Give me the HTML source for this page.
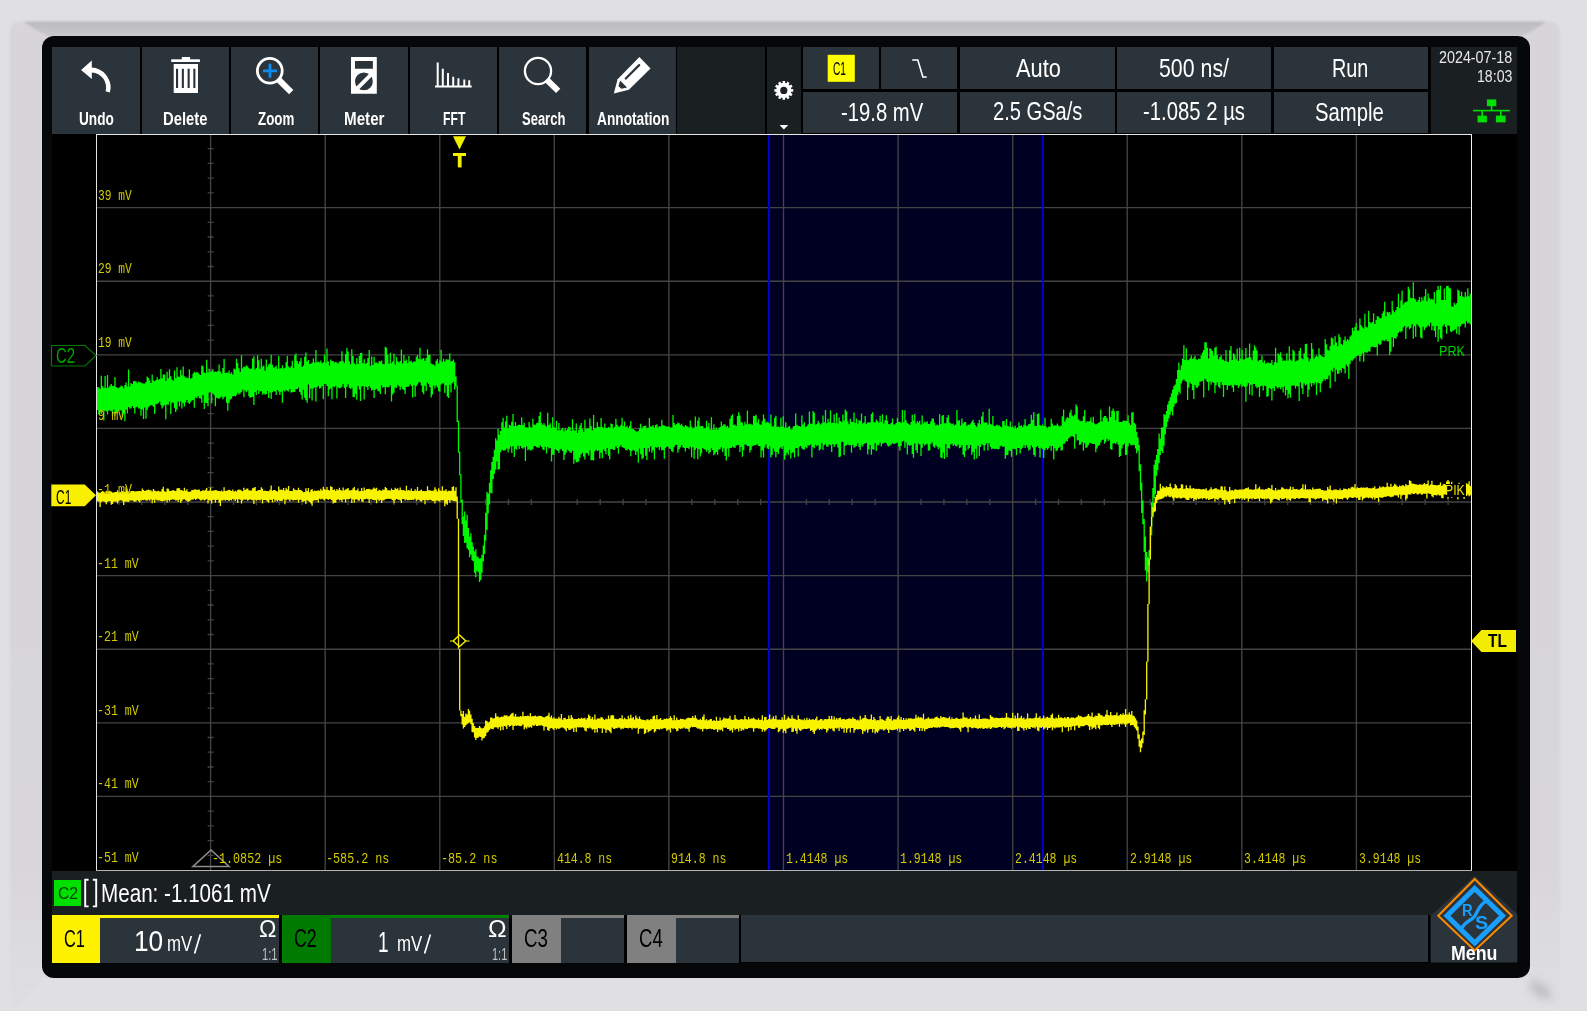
<!DOCTYPE html>
<html><head><meta charset="utf-8"><title>Oscilloscope</title>
<style>
html,body{margin:0;padding:0;}
body{width:1587px;height:1011px;overflow:hidden;position:relative;background:#e0dfe1;}
body>div,body>svg{position:absolute;}
.t{white-space:nowrap;transform-origin:0 0;font-kerning:none;}
</style></head><body>
<svg style="left:0;top:0" width="1587" height="1011" viewBox="0 0 1587 1011">
<defs>
<linearGradient id="gtop" x1="0" y1="0" x2="0" y2="1"><stop offset="0" stop-color="#bbbabd"/><stop offset="0.35" stop-color="#c1c0c3"/><stop offset="1" stop-color="#c8c7ca"/></linearGradient>
<linearGradient id="gside" gradientUnits="userSpaceOnUse" x1="0" y1="0" x2="0" y2="1011"><stop offset="0" stop-color="#d7d5d8"/><stop offset="0.85" stop-color="#d8d6d9"/><stop offset="1" stop-color="#dfdee0"/></linearGradient>
<filter id="bl1" x="-5%" y="-5%" width="110%" height="110%"><feGaussianBlur stdDeviation="1.2"/></filter>
<filter id="bl4" x="-100%" y="-100%" width="300%" height="300%"><feGaussianBlur stdDeviation="5"/></filter>
</defs>
<g filter="url(#bl1)">
<path d="M22,21.5 L1548,21.5 Q1560,21.5 1560,33 L1560,1011 L10,1011 L10,33 Q10,21.5 22,21.5 Z" fill="url(#gside)"/>
<path d="M24,21.5 L1546,21.5 Q1536,30 1521,36.5 L49,36.5 Q34,30 24,21.5 Z" fill="url(#gtop)"/>
<path d="M10,1013 L42,978 L1530,978 L1560,1013 Z" fill="#e0dfe1"/>
</g>
<ellipse cx="1540" cy="990" rx="13" ry="6" fill="#bdbcbf" transform="rotate(38 1540 990)" filter="url(#bl4)"/>
</svg>
<div style="left:42.00px;top:36.00px;width:1488.00px;height:942.00px;background:#060709;border-radius:12px;"></div>
<div style="left:52.00px;top:47.00px;width:1465.00px;height:916.00px;background:#000;"></div>
<div style="left:52.00px;top:47.00px;width:87.50px;height:86.50px;background:#2b343a;"></div>
<div style="left:141.70px;top:47.00px;width:87.30px;height:86.50px;background:#2b343a;"></div>
<div style="left:231.10px;top:47.00px;width:87.10px;height:86.50px;background:#2b343a;"></div>
<div style="left:320.40px;top:47.00px;width:87.40px;height:86.50px;background:#2b343a;"></div>
<div style="left:409.90px;top:47.00px;width:87.30px;height:86.50px;background:#2b343a;"></div>
<div style="left:499.20px;top:47.00px;width:87.20px;height:86.50px;background:#2b343a;"></div>
<div style="left:588.50px;top:47.00px;width:87.30px;height:86.50px;background:#2b343a;"></div>
<div style="left:676.90px;top:47.00px;width:88.20px;height:86.50px;background:#1a1f22;"></div>
<div style="left:767.00px;top:47.00px;width:34.00px;height:86.50px;background:#1a1f22;"></div>
<div style="left:802.60px;top:47.00px;width:76.20px;height:42.20px;background:#2b343a;"></div>
<div style="left:880.70px;top:47.00px;width:76.80px;height:42.20px;background:#2b343a;"></div>
<div style="left:959.50px;top:47.00px;width:155.30px;height:42.20px;background:#2b343a;"></div>
<div style="left:1117.20px;top:47.00px;width:154.20px;height:42.20px;background:#2b343a;"></div>
<div style="left:1273.80px;top:47.00px;width:154.70px;height:42.20px;background:#2b343a;"></div>
<div style="left:802.60px;top:91.90px;width:154.90px;height:41.60px;background:#2b343a;"></div>
<div style="left:959.50px;top:91.90px;width:155.30px;height:41.60px;background:#2b343a;"></div>
<div style="left:1117.20px;top:91.90px;width:154.20px;height:41.60px;background:#2b343a;"></div>
<div style="left:1273.80px;top:91.90px;width:154.70px;height:41.60px;background:#2b343a;"></div>
<div style="left:1430.60px;top:47.00px;width:86.40px;height:86.50px;background:#1a1f22;"></div>
<div class="t" style="left:78.68px;top:110.19px;font-family:'Liberation Sans',sans-serif;font-size:18.31px;line-height:18.31px;font-weight:700;color:#fff;transform:scaleX(0.7449);">Undo</div>
<div class="t" style="left:163.01px;top:110.19px;font-family:'Liberation Sans',sans-serif;font-size:18.31px;line-height:18.31px;font-weight:700;color:#fff;transform:scaleX(0.8095);">Delete</div>
<div class="t" style="left:257.70px;top:110.19px;font-family:'Liberation Sans',sans-serif;font-size:18.31px;line-height:18.31px;font-weight:700;color:#fff;transform:scaleX(0.7288);">Zoom</div>
<div class="t" style="left:344.08px;top:110.19px;font-family:'Liberation Sans',sans-serif;font-size:18.31px;line-height:18.31px;font-weight:700;color:#fff;transform:scaleX(0.8300);">Meter</div>
<div class="t" style="left:442.58px;top:110.19px;font-family:'Liberation Sans',sans-serif;font-size:18.31px;line-height:18.31px;font-weight:700;color:#fff;transform:scaleX(0.6659);">FFT</div>
<div class="t" style="left:522.33px;top:110.19px;font-family:'Liberation Sans',sans-serif;font-size:18.31px;line-height:18.31px;font-weight:700;color:#fff;transform:scaleX(0.7102);">Search</div>
<div class="t" style="left:597.46px;top:110.19px;font-family:'Liberation Sans',sans-serif;font-size:18.31px;line-height:18.31px;font-weight:700;color:#fff;transform:scaleX(0.7492);">Annotation</div>
<svg style="left:0;top:0" width="1587" height="1011" viewBox="0 0 1587 1011">
<g fill="#fff">
<path d="M81.1,70L91.8,60.5V67.6A20,20 0 0 1 110.6,88.5L109.8,92.5L105.6,91.3A15,15 0 0 0 91.8,72.4V79.1Z"/>
<rect x="171.2" y="59.3" width="28.7" height="2.7"/><rect x="181.8" y="57" width="8.3" height="3"/>
<path fill-rule="evenodd" d="M173.7,64H198V92.9H173.7Z M176,68.7h2.1V88h-2.1Z M181.8,68.7h2.1V88h-2.1Z M187.6,68.7h2.1V88h-2.1Z M193.3,68.7h2.1V88h-2.1Z"/>
<path fill-rule="evenodd" d="M351,56.9H376.8V93.8H351Z M355,60.9H372.9V68.7H355Z M355,81.4A8.9,8.9 0 1 0 372.8,81.4A8.9,8.9 0 1 0 355,81.4Z"/>
<path d="M356.5,86.5L370.5,72.5L373.2,75.2L359.2,89.2Z" transform="translate(-0.3,0.3)"/>
<path d="M435,85.6H471.7V87.6H435Z M436.7,62.5h2V86h-2Z M441.8,68.8h2V86h-2Z M447,73.1h2V86h-2Z M452.2,76.8h2V86h-2Z M457.4,78.2h2V86h-2Z M463.3,79.5h2V86h-2Z M468.2,80.2h2V86h-2Z"/>
<path d="M639.4,57.1L650.5,68.5L628.9,89.8L613.8,93.6L617.6,79.2Z"/>
</g>
<g fill="none" stroke="#fff">
<circle cx="269.8" cy="70.8" r="12.4" stroke-width="2.8"/>
<circle cx="538" cy="71" r="13.1" stroke-width="2.3"/>
</g>
<path d="M278.5,79.5L291.2,92.1" stroke="#fff" stroke-width="6"/>
<path d="M546.5,79.5L558.2,90.9" stroke="#fff" stroke-width="6"/>
<path d="M263,70.8H277.1M270,63.8V77.8" stroke="#0a8cf5" stroke-width="2.8"/>
<path d="M625.8,78.5L639.2,65.1" stroke="#2b343a" stroke-width="2.2" stroke-linecap="round"/>
<path d="M620,80.5L627.1,87.6L621.4,88.7L618.5,86.3Z" fill="#2b343a"/>
<path d="M791.30,89.17L793.21,89.09L793.21,91.71L791.30,91.63L790.91,93.09L792.60,93.97L791.30,96.24L789.68,95.21L788.61,96.28L789.64,97.90L787.37,99.20L786.49,97.51L785.03,97.90L785.11,99.81L782.49,99.81L782.57,97.90L781.11,97.51L780.23,99.20L777.96,97.90L778.99,96.28L777.92,95.21L776.30,96.24L775.00,93.97L776.69,93.09L776.30,91.63L774.39,91.71L774.39,89.09L776.30,89.17L776.69,87.71L775.00,86.83L776.30,84.56L777.92,85.59L778.99,84.52L777.96,82.90L780.23,81.60L781.11,83.29L782.57,82.90L782.49,80.99L785.11,80.99L785.03,82.90L786.49,83.29L787.37,81.60L789.64,82.90L788.61,84.52L789.68,85.59L791.30,84.56L792.60,86.83L790.91,87.71ZM787.40,90.40A3.6,3.6 0 1 0 780.20,90.40A3.6,3.6 0 1 0 787.40,90.40Z" fill="#fff" fill-rule="evenodd"/>
<path d="M779.6,125H788.2L783.9,129.6Z" fill="#fff"/>
<rect x="827.7" y="54.8" width="27.1" height="27" fill="#ffff00"/>
<path d="M912.2,60H917.8L922.9,77H926.7" fill="none" stroke="#fff" stroke-width="1.6"/>
<g fill="#00e000">
<rect x="1486.9" y="99.4" width="9.4" height="6.8"/>
<rect x="1473" y="109.8" width="36.9" height="1.6"/>
<rect x="1490.8" y="105" width="1.6" height="5"/>
<rect x="1477.5" y="115.6" width="9.4" height="6.8"/>
<rect x="1495.9" y="115.6" width="9.7" height="6.8"/>
<rect x="1481.4" y="111" width="1.6" height="5"/>
<rect x="1500" y="111" width="1.6" height="5"/>
</g>
</svg>
<div class="t" style="left:832.88px;top:59.89px;font-family:'Liberation Sans',sans-serif;font-size:18.31px;line-height:18.31px;font-weight:400;color:#000;transform:scaleX(0.5559);">C1</div>
<div class="t" style="left:1015.96px;top:55.59px;font-family:'Liberation Sans',sans-serif;font-size:25.87px;line-height:25.87px;font-weight:400;color:#fff;transform:scaleX(0.8428);">Auto</div>
<div class="t" style="left:1158.94px;top:55.59px;font-family:'Liberation Sans',sans-serif;font-size:25.87px;line-height:25.87px;font-weight:400;color:#fff;transform:scaleX(0.8255);">500 ns/</div>
<div class="t" style="left:1332.17px;top:56.31px;font-family:'Liberation Sans',sans-serif;font-size:25.15px;line-height:25.15px;font-weight:400;color:#fff;transform:scaleX(0.7895);">Run</div>
<div class="t" style="left:840.70px;top:98.97px;font-family:'Liberation Sans',sans-serif;font-size:26.02px;line-height:26.02px;font-weight:400;color:#fff;transform:scaleX(0.7796);">-19.8 mV</div>
<div class="t" style="left:993.29px;top:99.09px;font-family:'Liberation Sans',sans-serif;font-size:25.29px;line-height:25.29px;font-weight:400;color:#fff;transform:scaleX(0.7953);">2.5 GSa/s</div>
<div class="t" style="left:1142.90px;top:99.09px;font-family:'Liberation Sans',sans-serif;font-size:25.29px;line-height:25.29px;font-weight:400;color:#fff;transform:scaleX(0.8031);">-1.085 2 µs</div>
<div class="t" style="left:1315.08px;top:98.67px;font-family:'Liberation Sans',sans-serif;font-size:26.02px;line-height:26.02px;font-weight:400;color:#fff;transform:scaleX(0.7802);">Sample</div>
<div class="t" style="left:1439.28px;top:49.92px;font-family:'Liberation Sans',sans-serif;font-size:16.86px;line-height:16.86px;font-weight:400;color:#e8e8e8;transform:scaleX(0.8492);">2024-07-18</div>
<div class="t" style="left:1476.82px;top:67.89px;font-family:'Liberation Sans',sans-serif;font-size:16.42px;line-height:16.42px;font-weight:400;color:#e8e8e8;transform:scaleX(0.8613);">18:03</div>
<svg style="left:0;top:0" width="1587" height="1011" viewBox="0 0 1587 1011" shape-rendering="crispEdges"><rect x="768.5" y="135" width="274.5" height="735" fill="#000022"/><path d="M210.6,134V870M325.2,134V870M439.8,134V870M554.3,134V870M668.9,134V870M783.5,134V870M898.1,134V870M1012.7,134V870M1127.2,134V870M1241.8,134V870M1356.4,134V870M96,207.6H1471M96,281.2H1471M96,354.8H1471M96,428.4H1471M96,502.0H1471M96,575.6H1471M96,649.2H1471M96,722.8H1471M96,796.4H1471" stroke="#444" stroke-width="1.35" fill="none" shape-rendering="auto"/><path d="M207.6,148.7H213.6M207.6,163.4H213.6M207.6,178.2H213.6M207.6,192.9H213.6M207.6,222.3H213.6M207.6,237.0H213.6M207.6,251.8H213.6M207.6,266.5H213.6M207.6,295.9H213.6M207.6,310.6H213.6M207.6,325.4H213.6M207.6,340.1H213.6M207.6,369.5H213.6M207.6,384.2H213.6M207.6,399.0H213.6M207.6,413.7H213.6M207.6,443.1H213.6M207.6,457.8H213.6M207.6,472.6H213.6M207.6,487.3H213.6M207.6,516.7H213.6M207.6,531.4H213.6M207.6,546.2H213.6M207.6,560.9H213.6M207.6,590.3H213.6M207.6,605.0H213.6M207.6,619.8H213.6M207.6,634.5H213.6M207.6,663.9H213.6M207.6,678.6H213.6M207.6,693.4H213.6M207.6,708.1H213.6M207.6,737.5H213.6M207.6,752.2H213.6M207.6,767.0H213.6M207.6,781.7H213.6M207.6,811.1H213.6M207.6,825.8H213.6M207.6,840.6H213.6M207.6,855.3H213.6M118.9,499.0V505.0M141.8,499.0V505.0M164.8,499.0V505.0M187.7,499.0V505.0M233.5,499.0V505.0M256.4,499.0V505.0M279.3,499.0V505.0M302.2,499.0V505.0M348.1,499.0V505.0M371.0,499.0V505.0M393.9,499.0V505.0M416.8,499.0V505.0M462.7,499.0V505.0M485.6,499.0V505.0M508.5,499.0V505.0M531.4,499.0V505.0M577.2,499.0V505.0M600.2,499.0V505.0M623.1,499.0V505.0M646.0,499.0V505.0M691.8,499.0V505.0M714.8,499.0V505.0M737.7,499.0V505.0M760.6,499.0V505.0M806.4,499.0V505.0M829.3,499.0V505.0M852.2,499.0V505.0M875.2,499.0V505.0M921.0,499.0V505.0M943.9,499.0V505.0M966.8,499.0V505.0M989.8,499.0V505.0M1035.6,499.0V505.0M1058.5,499.0V505.0M1081.4,499.0V505.0M1104.3,499.0V505.0M1150.2,499.0V505.0M1173.1,499.0V505.0M1196.0,499.0V505.0M1218.9,499.0V505.0M1264.8,499.0V505.0M1287.7,499.0V505.0M1310.6,499.0V505.0M1333.5,499.0V505.0M1379.3,499.0V505.0M1402.2,499.0V505.0M1425.2,499.0V505.0M1448.1,499.0V505.0" stroke="#444" stroke-width="1.3" fill="none" shape-rendering="auto"/><path d="M768.8,135V870M1043.2,135V870" stroke="#0000d0" stroke-width="1.5" fill="none"/><path d="M97.6 386.9V410.2M98.9 387.4V414.4M100.1 388.9V412.3M101.3 375.8V414.1M102.6 386.3V410.3M103.8 387.9V420.5M105.1 375.9V410.7M106.3 387.9V411.3M107.5 374.9V414.5M108.8 387.6V410.5M110.0 385.4V410.6M111.3 384.1V411.3M112.5 385.9V416.3M113.7 386.0V409.6M115.0 377.0V415.4M116.2 387.3V413.1M117.5 387.4V413.7M118.7 388.2V410.2M119.9 387.0V410.2M121.2 385.5V410.4M122.4 386.3V416.9M123.7 388.5V413.0M124.9 384.9V421.3M126.1 382.4V409.6M127.4 386.6V413.3M128.6 369.5V407.1M129.9 386.5V408.8M131.1 383.1V408.2M132.3 383.9V406.2M133.6 381.3V408.0M134.8 380.8V413.6M136.1 381.6V407.3M137.3 383.3V406.8M138.5 381.6V408.6M139.8 382.3V408.6M141.0 382.4V415.8M142.3 383.2V409.4M143.5 383.6V419.1M144.7 383.6V407.4M146.0 381.9V418.7M147.2 376.4V409.9M148.5 378.1V407.2M149.7 380.3V406.0M150.9 383.0V404.9M152.2 374.6V405.5M153.4 380.6V406.7M154.7 381.2V413.9M155.9 380.1V404.3M157.1 377.3V403.9M158.4 379.8V403.1M159.6 378.9V401.4M160.9 369.0V404.9M162.1 378.3V408.4M163.3 374.6V406.4M164.6 374.6V405.3M165.8 381.0V419.2M167.1 371.7V404.4M168.3 378.3V404.7M169.5 369.3V401.6M170.8 376.3V414.3M172.0 379.5V402.7M173.3 380.5V402.8M174.5 370.5V408.1M175.7 378.2V412.0M177.0 367.3V409.4M178.2 376.4V401.4M179.5 376.9V406.4M180.7 370.0V401.6M181.9 375.3V408.4M183.2 366.6V402.9M184.4 376.2V406.4M185.7 377.4V402.6M186.9 377.7V400.0M188.1 377.7V402.8M189.4 369.3V403.9M190.6 378.7V402.3M191.9 377.8V400.6M193.1 373.5V400.1M194.3 371.7V407.7M195.6 372.8V397.6M196.8 372.0V398.2M198.1 372.6V396.0M199.3 374.3V398.2M200.5 375.0V398.5M201.8 365.6V402.8M203.0 366.3V395.1M204.3 372.4V408.9M205.5 373.2V402.8M206.7 359.7V403.0M208.0 372.5V406.3M209.2 368.9V392.7M210.5 371.8V392.1M211.7 370.8V403.3M212.9 369.5V393.5M214.2 372.1V395.2M215.4 371.6V406.3M216.7 371.9V397.7M217.9 371.0V398.3M219.1 364.5V399.1M220.4 371.5V397.4M221.6 373.7V396.4M222.9 367.9V399.3M224.1 359.0V397.4M225.3 373.0V396.5M226.6 372.7V402.8M227.8 372.8V410.7M229.1 370.5V402.9M230.3 373.7V399.4M231.5 372.3V398.8M232.8 374.6V396.3M234.0 368.6V396.0M235.3 369.5V396.2M236.5 358.8V395.2M237.7 363.1V392.7M239.0 368.3V394.6M240.2 372.1V393.5M241.5 355.3V392.0M242.7 368.3V389.8M243.9 366.4V397.2M245.2 366.9V390.5M246.4 365.3V392.3M247.7 366.3V390.6M248.9 368.0V396.3M250.1 369.1V398.1M251.4 368.6V396.9M252.6 358.4V397.0M253.9 356.3V405.0M255.1 369.5V391.9M256.3 368.1V395.1M257.6 355.6V390.3M258.8 360.2V393.9M260.1 368.7V391.2M261.3 358.7V391.0M262.5 366.5V394.8M263.8 365.6V393.6M265.0 370.7V394.7M266.3 359.6V394.1M267.5 366.7V390.9M268.7 364.6V398.1M270.0 363.4V392.4M271.2 354.8V398.9M272.5 364.7V392.3M273.7 367.7V390.7M274.9 367.2V391.5M276.2 365.6V394.9M277.4 368.7V390.1M278.7 356.0V391.6M279.9 368.6V395.1M281.1 368.2V391.7M282.4 365.2V402.7M283.6 368.4V390.5M284.9 368.1V391.7M286.1 362.1V389.9M287.3 356.1V390.9M288.6 366.4V391.4M289.8 368.1V388.9M291.1 366.3V392.8M292.3 360.8V392.0M293.5 368.0V392.3M294.8 355.2V391.9M296.0 353.4V389.1M297.3 360.9V389.2M298.5 363.8V387.6M299.7 361.2V391.9M301.0 357.9V394.7M302.2 367.0V399.6M303.5 365.6V389.7M304.7 356.7V397.8M305.9 352.6V400.2M307.2 361.5V402.7M308.4 360.0V384.4M309.7 363.9V398.2M310.9 363.7V388.6M312.1 362.6V400.6M313.4 358.6V388.5M314.6 362.5V387.5M315.9 350.0V401.5M317.1 362.2V387.3M318.3 361.5V385.9M319.6 362.4V388.4M320.8 360.4V387.9M322.1 363.2V385.9M323.3 362.5V399.2M324.5 354.5V383.9M325.8 362.7V383.9M327.0 348.6V386.0M328.3 361.5V396.2M329.5 365.6V389.5M330.7 359.6V388.5M332.0 361.0V399.2M333.2 361.1V386.7M334.5 362.5V387.0M335.7 361.8V385.8M336.9 362.6V398.4M338.2 363.5V387.6M339.4 361.4V388.3M340.7 361.3V388.0M341.9 351.3V386.8M343.1 361.0V383.9M344.4 362.8V388.1M345.6 354.2V398.0M346.9 347.9V386.7M348.1 351.4V384.3M349.3 361.3V387.8M350.6 364.2V389.0M351.8 349.2V387.4M353.1 356.1V397.1M354.3 363.2V397.3M355.5 364.5V393.8M356.8 357.9V399.8M358.0 363.9V386.0M359.3 356.0V389.5M360.5 353.1V400.9M361.7 352.8V386.4M363.0 363.2V386.1M364.2 359.3V399.5M365.5 363.9V386.4M366.7 363.0V386.9M367.9 357.9V389.9M369.2 349.9V386.0M370.4 365.8V387.8M371.7 356.5V390.6M372.9 365.0V389.8M374.1 356.7V397.9M375.4 362.7V389.8M376.6 362.5V389.1M377.9 363.4V390.9M379.1 361.0V391.4M380.3 361.4V393.9M381.6 360.4V385.2M382.8 363.9V387.8M384.1 364.3V387.1M385.3 346.7V394.2M386.5 347.7V386.9M387.8 354.6V387.5M389.0 363.4V387.3M390.3 352.7V385.5M391.5 363.3V401.6M392.7 361.6V394.4M394.0 353.4V392.7M395.2 364.5V387.5M396.5 356.9V387.9M397.7 361.0V384.7M398.9 362.6V386.3M400.2 361.1V390.1M401.4 349.5V386.7M402.7 363.4V389.0M403.9 355.1V390.3M405.1 361.0V394.1M406.4 359.5V387.1M407.6 363.3V386.8M408.9 356.1V386.4M410.1 361.6V384.3M411.3 360.8V385.9M412.6 362.5V397.5M413.8 361.5V385.0M415.1 361.6V396.7M416.3 356.8V386.2M417.5 355.0V384.6M418.8 359.0V382.4M420.0 347.8V382.2M421.3 359.5V385.4M422.5 358.7V392.2M423.7 357.9V394.3M425.0 360.9V385.7M426.2 357.9V391.0M427.5 349.2V382.6M428.7 354.8V384.2M429.9 354.7V387.3M431.2 363.4V397.5M432.4 364.2V394.4M433.7 364.5V385.6M434.9 365.4V388.3M436.1 360.7V385.5M437.4 358.9V387.6M438.6 363.4V391.2M439.9 360.5V391.7M441.1 349.8V384.5M442.3 361.8V383.3M443.6 358.7V383.4M444.8 361.4V393.0M446.1 359.3V385.4M447.3 359.5V396.4M448.5 359.6V398.0M449.8 353.3V384.8M451.0 361.3V392.4M452.3 361.0V383.0M453.5 359.4V381.7M454.7 362.5V389.6M456.0 376.6V386.3M457.2 385.4V421.9M458.5 420.8V452.7M459.7 451.8V475.3M460.9 474.2V502.4M462.2 499.9V524.2M463.4 516.4V536.0M464.7 511.6V543.1M465.9 520.6V542.8M467.1 514.8V548.2M468.4 528.1V550.0M469.6 536.4V557.3M470.9 533.2V554.5M472.1 541.9V560.2M473.3 546.5V561.3M474.6 551.2V572.7M475.8 549.3V577.3M477.1 556.2V570.7M478.3 557.5V572.2M479.5 558.8V582.0M480.8 558.3V580.0M482.0 554.7V572.8M483.3 545.4V561.6M484.5 534.7V554.1M485.7 512.8V540.8M487.0 491.8V529.7M488.2 493.5V513.6M489.5 482.7V504.6M490.7 470.2V492.8M491.9 462.0V493.6M493.2 456.8V478.9M494.4 449.8V473.7M495.7 438.3V469.7M496.9 440.6V461.5M498.1 428.7V469.8M499.4 434.8V468.9M500.6 430.9V452.2M501.9 422.3V449.8M503.1 417.7V450.6M504.3 427.4V450.4M505.6 421.2V450.2M506.8 415.7V448.5M508.1 428.2V452.6M509.3 424.8V449.1M510.5 425.4V446.6M511.8 421.8V452.9M513.0 414.0V446.3M514.3 426.1V457.0M515.5 421.9V448.7M516.7 426.0V449.8M518.0 425.1V445.8M519.2 424.5V449.1M520.5 425.1V446.0M521.7 417.6V447.9M522.9 424.9V448.8M524.2 422.8V447.2M525.4 427.3V460.9M526.7 427.3V446.4M527.9 427.8V450.3M529.1 422.1V449.3M530.4 426.7V450.5M531.6 427.8V450.2M532.9 418.8V449.3M534.1 424.6V446.0M535.3 424.9V446.3M536.6 423.2V447.2M537.8 422.8V447.6M539.1 416.0V447.8M540.3 411.9V445.5M541.5 423.1V447.1M542.8 424.8V449.5M544.0 423.2V450.2M545.3 425.3V446.7M546.5 426.5V453.6M547.7 412.8V446.9M549.0 425.1V448.7M550.2 423.2V448.1M551.5 427.9V461.6M552.7 417.3V454.7M553.9 426.8V454.7M555.2 428.1V448.9M556.4 420.8V450.1M557.7 430.6V451.0M558.9 423.1V453.1M560.1 430.2V449.5M561.4 429.3V448.8M562.6 427.9V451.0M563.9 431.3V460.0M565.1 428.2V454.8M566.3 430.3V452.4M567.6 428.7V449.4M568.8 426.5V451.1M570.1 427.2V452.4M571.3 431.1V452.9M572.5 419.2V450.7M573.8 429.8V463.8M575.0 430.8V459.4M576.3 423.6V462.2M577.5 433.0V462.2M578.7 429.8V461.6M580.0 425.6V457.8M581.2 422.9V454.6M582.5 428.9V452.8M583.7 432.1V456.4M584.9 419.7V459.6M586.2 429.0V452.9M587.4 428.2V453.4M588.7 428.6V455.6M589.9 418.5V450.2M591.1 426.0V460.3M592.4 430.2V459.9M593.6 414.9V460.6M594.9 428.2V451.2M596.1 427.8V449.8M597.3 421.9V450.9M598.6 426.8V450.6M599.8 427.2V458.4M601.1 417.9V452.8M602.3 426.9V458.3M603.5 428.2V449.2M604.8 423.6V450.9M606.0 428.0V454.2M607.3 428.3V448.1M608.5 427.1V455.8M609.7 427.8V459.5M611.0 423.6V449.1M612.2 424.1V449.0M613.5 428.6V449.9M614.7 426.8V449.8M615.9 418.7V446.3M617.2 424.7V448.0M618.4 426.5V453.8M619.7 426.8V447.1M620.9 424.7V445.3M622.1 417.7V447.2M623.4 425.9V447.7M624.6 421.6V448.3M625.9 427.1V450.1M627.1 425.7V450.4M628.3 427.9V449.1M629.6 425.7V450.6M630.8 420.9V456.2M632.1 428.9V450.9M633.3 428.9V449.7M634.5 430.0V450.7M635.8 431.2V455.1M637.0 431.8V451.6M638.3 430.9V462.8M639.5 428.4V448.4M640.7 423.7V454.2M642.0 428.5V459.3M643.2 426.2V458.0M644.5 426.1V447.9M645.7 425.4V455.7M646.9 428.2V460.1M648.2 427.7V447.9M649.4 418.0V451.7M650.7 426.4V446.3M651.9 426.5V452.7M653.1 425.1V450.2M654.4 427.6V459.6M655.6 425.0V446.9M656.9 424.3V447.7M658.1 427.5V446.8M659.3 425.9V449.9M660.6 426.6V447.3M661.8 419.8V450.4M663.1 425.3V449.9M664.3 425.6V458.8M665.5 426.3V448.0M666.8 426.5V446.8M668.0 426.6V446.7M669.3 426.4V448.6M670.5 427.5V449.1M671.7 427.6V451.2M673.0 415.0V452.3M674.2 422.9V447.1M675.5 424.9V445.0M676.7 423.9V444.8M677.9 422.6V452.7M679.2 423.3V449.3M680.4 425.0V447.2M681.7 423.7V445.0M682.9 426.1V447.4M684.1 427.0V447.9M685.4 424.9V451.4M686.6 425.9V447.9M687.9 426.5V447.9M689.1 427.5V449.2M690.3 420.4V446.8M691.6 426.4V457.2M692.8 428.6V447.3M694.1 427.5V458.8M695.3 416.4V449.9M696.5 426.6V448.0M697.8 420.6V459.2M699.0 417.6V449.3M700.3 426.2V456.5M701.5 426.0V453.2M702.7 425.9V447.9M704.0 428.9V449.1M705.2 428.0V449.7M706.5 420.7V451.7M707.7 426.7V449.8M708.9 423.0V453.8M710.2 429.6V452.0M711.4 417.2V448.1M712.7 429.5V449.9M713.9 424.3V455.2M715.1 429.6V453.8M716.4 427.4V451.9M717.6 429.7V454.7M718.9 428.2V449.6M720.1 426.9V449.2M721.3 421.4V447.2M722.6 425.7V452.1M723.8 424.3V448.2M725.1 424.6V456.1M726.3 426.7V460.6M727.5 425.8V448.6M728.8 427.7V456.8M730.0 418.7V448.0M731.3 415.8V448.1M732.5 414.3V446.4M733.7 424.8V447.6M735.0 424.7V447.9M736.2 426.1V445.6M737.5 416.1V444.9M738.7 412.3V445.1M739.9 415.6V451.9M741.2 422.1V447.0M742.4 422.8V456.7M743.7 425.7V450.2M744.9 421.8V444.5M746.1 424.3V444.8M747.4 410.6V446.3M748.6 424.2V446.1M749.9 423.5V452.6M751.1 424.3V450.1M752.3 424.8V446.3M753.6 415.8V445.4M754.8 415.9V445.3M756.1 414.7V444.9M757.3 422.4V444.3M758.5 419.3V446.0M759.8 424.3V446.1M761.0 424.9V457.5M762.3 421.0V450.5M763.5 414.6V457.4M764.7 418.7V447.6M766.0 422.8V444.6M767.2 421.7V448.6M768.5 422.5V449.2M769.7 423.6V446.3M770.9 414.5V457.6M772.2 426.6V454.9M773.4 426.2V448.5M774.7 417.8V451.6M775.9 415.7V457.2M777.1 426.9V452.0M778.4 426.4V454.0M779.6 427.2V448.8M780.9 417.7V447.2M782.1 426.4V449.1M783.3 416.2V446.1M784.6 427.4V459.7M785.8 422.3V455.6M787.1 427.9V452.8M788.3 426.8V454.7M789.5 426.0V449.8M790.8 429.2V458.6M792.0 429.2V452.9M793.3 426.6V452.3M794.5 426.0V457.5M795.7 413.4V448.2M797.0 424.7V447.9M798.2 425.9V456.4M799.5 425.9V446.8M800.7 426.8V445.9M801.9 415.6V448.6M803.2 424.4V449.4M804.4 422.3V449.5M805.7 427.0V446.9M806.9 425.9V448.3M808.1 424.3V445.2M809.4 411.5V445.7M810.6 423.4V444.5M811.9 423.9V457.6M813.1 411.0V447.0M814.3 412.7V448.3M815.6 424.4V444.8M816.8 424.1V446.2M818.1 420.7V445.3M819.3 422.8V450.6M820.5 424.4V449.3M821.8 423.2V443.2M823.0 415.4V449.9M824.3 422.2V444.9M825.5 410.0V443.7M826.7 423.3V446.4M828.0 418.7V446.7M829.2 422.2V444.4M830.5 410.5V445.0M831.7 422.9V451.9M832.9 422.7V444.2M834.2 414.2V447.0M835.4 423.2V444.7M836.7 412.7V444.1M837.9 423.4V447.4M839.1 417.5V457.3M840.4 420.9V456.4M841.6 422.3V441.8M842.9 414.6V441.7M844.1 420.5V455.0M845.3 409.4V446.0M846.6 411.2V445.3M847.8 421.5V444.3M849.1 424.3V445.5M850.3 418.8V444.9M851.5 421.7V452.7M852.8 422.0V445.0M854.0 412.6V447.8M855.3 423.1V446.7M856.5 418.6V446.0M857.7 423.4V443.3M859.0 420.2V447.1M860.2 420.7V450.0M861.5 413.5V444.7M862.7 423.5V446.4M863.9 422.6V444.1M865.2 416.1V443.6M866.4 423.8V442.9M867.7 422.3V454.6M868.9 422.6V449.3M870.1 422.3V444.9M871.4 414.1V454.8M872.6 412.3V449.2M873.9 422.0V449.8M875.1 422.4V443.3M876.3 419.4V450.9M877.6 421.1V445.2M878.8 422.6V445.2M880.1 415.7V442.6M881.3 421.9V446.5M882.5 414.3V443.8M883.8 423.5V443.3M885.0 420.3V442.6M886.3 415.3V443.2M887.5 420.7V445.4M888.7 424.1V446.4M890.0 424.3V445.5M891.2 422.7V444.6M892.5 418.6V443.2M893.7 424.2V444.0M894.9 424.4V443.8M896.2 423.1V443.2M897.4 417.8V442.6M898.7 422.1V446.4M899.9 421.7V450.6M901.1 422.7V446.1M902.4 410.1V441.6M903.6 422.3V440.8M904.9 410.2V447.7M906.1 420.3V442.5M907.3 423.1V454.5M908.6 423.8V445.0M909.8 425.1V446.1M911.1 422.0V445.1M912.3 414.8V453.9M913.5 420.6V457.8M914.8 414.1V443.6M916.0 423.5V450.3M917.3 420.9V453.1M918.5 422.6V443.6M919.7 420.7V444.5M921.0 424.7V456.0M922.2 415.4V447.7M923.5 423.6V443.5M924.7 421.5V445.4M925.9 422.4V444.4M927.2 421.3V443.7M928.4 423.9V450.8M929.7 423.7V450.2M930.9 421.3V444.0M932.1 418.5V442.4M933.4 418.4V446.4M934.6 422.8V447.7M935.9 425.6V445.3M937.1 424.5V446.8M938.3 425.3V449.3M939.6 414.2V447.5M940.8 423.9V457.6M942.1 415.8V458.3M943.3 414.9V452.5M944.5 423.2V459.1M945.8 423.3V444.1M947.0 417.5V456.9M948.3 414.9V447.9M949.5 422.6V448.8M950.7 423.3V444.5M952.0 424.2V443.8M953.2 423.6V446.1M954.5 425.3V444.8M955.7 424.6V446.0M956.9 410.1V446.5M958.2 420.6V444.4M959.4 420.3V448.2M960.7 425.5V447.4M961.9 418.6V445.2M963.1 423.4V454.8M964.4 421.9V457.1M965.6 422.0V450.9M966.9 425.7V444.9M968.1 424.6V449.6M969.3 424.8V447.9M970.6 423.4V445.0M971.8 421.5V454.8M973.1 419.7V452.0M974.3 423.1V459.6M975.5 425.2V448.8M976.8 426.7V458.4M978.0 423.2V445.7M979.3 419.9V456.1M980.5 424.2V447.1M981.7 416.6V444.1M983.0 411.8V445.0M984.2 422.6V450.7M985.5 422.5V445.3M986.7 422.4V443.2M987.9 424.5V450.5M989.2 408.8V443.2M990.4 423.7V446.9M991.7 424.8V449.2M992.9 416.0V448.5M994.1 426.0V449.0M995.4 425.8V449.0M996.6 424.8V448.8M997.9 425.5V449.6M999.1 425.2V449.1M1000.3 426.5V446.3M1001.6 427.2V445.6M1002.8 421.1V446.9M1004.1 421.0V446.6M1005.3 425.2V458.7M1006.5 419.1V455.2M1007.8 425.9V455.1M1009.0 426.4V450.5M1010.3 421.4V451.0M1011.5 427.0V456.7M1012.7 426.2V448.8M1014.0 428.0V448.8M1015.2 425.8V449.2M1016.5 428.5V455.2M1017.7 427.6V447.9M1018.9 422.5V447.9M1020.2 425.9V453.5M1021.4 425.3V449.1M1022.7 426.9V447.8M1023.9 424.7V445.3M1025.1 419.0V448.1M1026.4 426.0V445.3M1027.6 425.4V447.4M1028.9 423.9V450.8M1030.1 423.7V449.6M1031.3 414.8V445.2M1032.6 419.7V447.6M1033.8 412.1V455.1M1035.1 425.8V456.7M1036.3 426.0V447.0M1037.5 414.1V446.0M1038.8 413.3V448.1M1040.0 424.9V457.4M1041.3 426.0V447.7M1042.5 424.6V448.9M1043.7 426.1V458.0M1045.0 417.8V450.1M1046.2 426.5V448.0M1047.5 428.6V449.8M1048.7 426.4V448.3M1049.9 426.7V446.0M1051.2 418.8V450.8M1052.4 423.6V446.0M1053.7 426.0V459.6M1054.9 425.2V448.2M1056.1 425.6V451.3M1057.4 423.5V450.6M1058.6 425.4V447.9M1059.9 426.6V446.7M1061.1 425.5V450.7M1062.3 416.3V450.1M1063.6 409.5V443.8M1064.8 421.6V443.4M1066.1 418.7V441.0M1067.3 417.1V441.5M1068.5 418.0V438.5M1069.8 412.4V437.4M1071.0 409.7V436.2M1072.3 415.6V436.0M1073.5 416.4V437.1M1074.7 414.8V448.7M1076.0 404.6V433.9M1077.2 406.5V440.6M1078.5 419.2V440.2M1079.7 420.5V444.9M1080.9 421.3V444.2M1082.2 421.0V441.9M1083.4 416.3V450.7M1084.7 410.0V443.3M1085.9 422.5V447.9M1087.1 421.2V447.2M1088.4 421.4V445.2M1089.6 420.9V442.8M1090.9 417.5V443.0M1092.1 422.6V443.7M1093.3 416.8V444.1M1094.6 423.4V444.1M1095.8 424.4V452.2M1097.1 423.7V448.4M1098.3 422.9V445.9M1099.5 422.1V444.9M1100.8 409.5V442.6M1102.0 421.6V440.0M1103.3 417.6V439.4M1104.5 415.9V443.7M1105.7 416.1V442.1M1107.0 418.0V438.7M1108.2 421.5V441.1M1109.5 406.5V439.7M1110.7 417.1V449.1M1111.9 410.7V450.1M1113.2 408.6V443.4M1114.4 411.3V443.0M1115.7 420.3V443.9M1116.9 411.0V442.6M1118.1 410.7V444.7M1119.4 421.9V456.9M1120.6 422.1V456.0M1121.9 422.1V448.4M1123.1 420.6V445.1M1124.3 420.8V443.8M1125.6 420.7V455.1M1126.8 420.9V454.8M1128.1 415.3V446.5M1129.3 423.0V443.0M1130.5 424.9V444.7M1131.8 412.5V445.4M1133.0 412.0V444.7M1134.3 423.1V445.1M1135.5 424.3V448.4M1136.7 431.7V453.2M1138.0 437.5V450.4M1139.2 445.0V471.3M1140.5 464.3V490.4M1141.7 482.6V513.1M1142.9 500.5V524.2M1144.2 519.0V552.0M1145.4 536.6V570.5M1146.7 552.0V581.6M1147.9 556.9V572.4M1149.1 550.1V565.1M1150.4 527.1V556.2M1151.6 502.2V535.2M1152.9 488.0V515.6M1154.1 464.7V497.9M1155.3 459.8V494.1M1156.6 454.8V475.8M1157.8 448.9V470.0M1159.1 433.6V463.0M1160.3 438.7V455.0M1161.5 427.4V451.0M1162.8 427.3V453.0M1164.0 413.9V445.7M1165.3 415.1V434.2M1166.5 411.1V427.2M1167.7 404.6V422.1M1169.0 401.1V418.3M1170.2 397.2V414.8M1171.5 393.6V411.4M1172.7 389.6V415.5M1173.9 386.1V406.8M1175.2 384.4V403.8M1176.4 379.0V403.1M1177.7 370.0V395.2M1178.9 362.6V391.8M1180.1 370.1V393.8M1181.4 365.2V383.5M1182.6 358.7V380.5M1183.9 345.3V379.6M1185.1 359.9V380.8M1186.3 348.2V381.9M1187.6 360.2V399.9M1188.8 359.7V387.4M1190.1 358.2V382.6M1191.3 355.5V383.9M1192.5 358.9V390.3M1193.8 357.8V399.0M1195.0 355.8V385.0M1196.3 359.4V387.4M1197.5 359.9V387.7M1198.7 358.8V385.7M1200.0 358.9V381.7M1201.2 355.4V381.6M1202.5 352.4V381.1M1203.7 349.9V397.6M1204.9 342.3V378.7M1206.2 342.3V380.5M1207.4 347.7V382.0M1208.7 358.6V390.4M1209.9 348.2V381.6M1211.1 349.0V384.8M1212.4 351.0V382.0M1213.6 355.8V382.9M1214.9 347.8V393.2M1216.1 346.6V385.3M1217.3 355.0V382.5M1218.6 359.2V386.7M1219.8 356.9V388.3M1221.1 355.3V382.0M1222.3 359.5V384.9M1223.5 359.4V397.0M1224.8 361.0V385.1M1226.0 350.0V385.2M1227.3 361.4V389.9M1228.5 361.9V385.4M1229.7 350.3V386.1M1231.0 346.0V384.9M1232.2 360.0V387.4M1233.5 353.2V391.9M1234.7 354.4V384.7M1235.9 359.2V385.5M1237.2 348.5V384.9M1238.4 361.0V388.1M1239.7 347.8V385.9M1240.9 358.8V384.2M1242.1 349.9V386.7M1243.4 359.6V385.8M1244.6 359.2V387.1M1245.9 348.0V401.8M1247.1 358.1V386.3M1248.3 357.6V383.0M1249.6 343.6V394.5M1250.8 357.2V384.8M1252.1 360.2V395.4M1253.3 350.6V384.1M1254.5 345.3V384.0M1255.8 347.4V386.4M1257.0 350.5V388.3M1258.3 361.3V387.0M1259.5 360.1V396.9M1260.7 359.8V386.2M1262.0 355.4V385.7M1263.2 362.4V390.4M1264.5 360.4V385.7M1265.7 364.0V386.2M1266.9 362.7V396.9M1268.2 362.4V396.1M1269.4 363.2V387.9M1270.7 362.9V388.9M1271.9 360.1V400.6M1273.1 365.0V387.9M1274.4 362.3V391.0M1275.6 347.7V386.1M1276.9 362.6V387.5M1278.1 353.3V388.5M1279.3 354.8V387.0M1280.6 352.3V389.2M1281.8 357.6V387.1M1283.1 360.9V392.4M1284.3 360.4V386.4M1285.5 360.8V395.5M1286.8 353.3V389.9M1288.0 360.5V398.6M1289.3 346.3V394.0M1290.5 359.4V397.8M1291.7 360.8V385.8M1293.0 349.8V385.6M1294.2 351.3V385.4M1295.5 361.5V388.4M1296.7 360.7V386.0M1297.9 360.2V386.4M1299.2 351.0V401.0M1300.4 348.0V382.4M1301.7 358.0V388.2M1302.9 359.2V394.1M1304.1 353.2V383.4M1305.4 343.9V385.5M1306.6 343.8V384.5M1307.9 357.3V397.0M1309.1 361.6V389.8M1310.3 358.8V383.2M1311.6 343.1V386.5M1312.8 349.0V383.0M1314.1 358.8V384.7M1315.3 356.6V382.3M1316.5 355.6V395.1M1317.8 356.7V382.8M1319.0 348.3V383.3M1320.3 355.0V392.3M1321.5 356.0V383.6M1322.7 356.5V381.5M1324.0 356.9V378.7M1325.2 339.0V380.6M1326.5 344.3V379.1M1327.7 349.8V379.2M1328.9 350.5V375.5M1330.2 346.1V388.3M1331.4 337.6V370.2M1332.7 338.2V371.8M1333.9 344.7V367.7M1335.1 336.3V381.7M1336.4 342.5V369.7M1337.6 346.3V374.1M1338.9 334.3V373.4M1340.1 337.0V369.9M1341.3 344.0V372.4M1342.6 344.7V367.9M1343.8 340.0V368.7M1345.1 336.4V373.5M1346.3 341.3V364.6M1347.5 339.1V366.4M1348.8 340.2V378.9M1350.0 336.5V363.9M1351.3 335.2V360.4M1352.5 327.8V360.7M1353.7 331.1V359.3M1355.0 326.9V358.1M1356.2 323.2V356.3M1357.5 330.6V355.7M1358.7 330.6V355.6M1359.9 318.5V361.5M1361.2 325.3V356.1M1362.4 327.3V353.6M1363.7 328.6V361.7M1364.9 313.7V351.9M1366.1 326.8V352.8M1367.4 327.6V352.4M1368.6 310.7V351.3M1369.9 322.0V351.8M1371.1 323.2V347.2M1372.3 321.9V346.5M1373.6 313.3V346.9M1374.8 324.1V347.6M1376.1 320.0V346.9M1377.3 316.3V355.5M1378.5 316.4V343.8M1379.8 318.2V345.0M1381.0 318.2V344.2M1382.3 313.4V340.4M1383.5 311.2V340.4M1384.7 301.8V341.1M1386.0 316.2V339.5M1387.2 311.7V341.3M1388.5 312.6V341.4M1389.7 312.1V354.9M1390.9 314.8V351.4M1392.2 301.1V337.2M1393.4 310.5V347.1M1394.7 312.2V337.9M1395.9 310.1V339.1M1397.1 306.9V336.6M1398.4 293.7V333.1M1399.6 308.1V331.4M1400.9 300.5V332.3M1402.1 290.6V331.1M1403.3 304.6V327.4M1404.6 302.7V326.1M1405.8 301.8V339.0M1407.1 301.4V327.4M1408.3 286.7V326.6M1409.5 289.2V329.3M1410.8 297.9V327.9M1412.0 298.3V324.0M1413.3 282.2V338.7M1414.5 298.4V326.2M1415.7 299.5V336.8M1417.0 301.9V324.2M1418.2 300.0V325.7M1419.5 297.1V327.4M1420.7 301.8V337.4M1421.9 297.3V338.5M1423.2 300.6V326.8M1424.4 296.2V330.1M1425.7 289.0V327.7M1426.9 301.3V326.9M1428.1 293.6V325.3M1429.4 298.1V326.4M1430.6 299.6V322.8M1431.9 298.8V330.2M1433.1 299.8V325.9M1434.3 292.0V331.1M1435.6 303.4V336.9M1436.8 290.3V326.1M1438.1 286.1V341.7M1439.3 289.8V329.4M1440.5 285.7V337.9M1441.8 299.9V339.6M1443.0 300.0V326.2M1444.3 288.6V324.3M1445.5 300.1V327.1M1446.7 285.9V333.8M1448.0 285.7V325.3M1449.2 287.7V326.0M1450.5 288.6V331.5M1451.7 306.5V332.1M1452.9 306.5V330.8M1454.2 302.8V330.3M1455.4 304.7V328.9M1456.7 303.2V333.7M1457.9 289.5V326.6M1459.1 290.8V334.8M1460.4 296.0V326.4M1461.6 291.8V324.2M1462.9 296.6V323.7M1464.1 297.3V323.7M1465.3 292.1V327.6M1466.6 296.4V321.0M1467.8 288.3V323.6M1469.1 296.2V322.7M1470.3 293.7V324.4" stroke="#00f800" stroke-width="1.3" fill="none" shape-rendering="auto"/><path d="M97.6 491.4V501.3M98.9 492.6V501.5M100.1 493.0V507.0M101.3 491.7V502.0M102.6 491.1V501.2M103.8 491.7V501.6M105.1 492.4V502.1M106.3 490.7V504.3M107.5 491.7V502.0M108.8 491.3V501.1M110.0 490.7V501.2M111.3 491.8V504.7M112.5 492.5V504.0M113.7 492.4V501.8M115.0 492.0V501.5M116.2 492.1V501.8M117.5 490.3V503.4M118.7 492.2V501.2M119.9 492.0V500.3M121.2 491.8V500.2M122.4 491.1V501.2M123.7 491.6V505.0M124.9 491.9V501.7M126.1 486.9V501.4M127.4 490.2V501.8M128.6 491.5V502.1M129.9 492.6V500.5M131.1 491.1V500.4M132.3 491.0V500.4M133.6 491.0V501.2M134.8 491.5V501.7M136.1 491.2V501.5M137.3 491.2V500.1M138.5 491.1V501.3M139.8 490.9V502.5M141.0 491.3V500.2M142.3 488.4V499.9M143.5 490.0V500.2M144.7 491.1V499.8M146.0 490.5V500.5M147.2 490.1V500.7M148.5 489.4V499.8M149.7 490.2V500.7M150.9 490.3V499.4M152.2 491.5V503.3M153.4 489.0V500.0M154.7 490.6V502.8M155.9 491.3V499.4M157.1 491.2V500.6M158.4 490.8V500.4M159.6 491.4V500.5M160.9 491.4V501.1M162.1 488.9V501.6M163.3 486.8V501.0M164.6 491.2V500.7M165.8 491.8V500.2M167.1 488.6V502.4M168.3 488.8V499.9M169.5 490.7V501.3M170.8 491.0V500.0M172.0 490.5V499.6M173.3 490.0V499.4M174.5 490.8V499.7M175.7 491.1V500.4M177.0 488.5V500.2M178.2 487.9V501.9M179.5 488.2V499.7M180.7 490.3V502.9M181.9 490.1V500.9M183.2 491.0V499.4M184.4 487.8V499.2M185.7 490.7V500.5M186.9 489.3V500.7M188.1 491.7V501.9M189.4 491.8V500.9M190.6 491.5V500.6M191.9 490.0V499.4M193.1 490.1V499.8M194.3 489.4V498.8M195.6 489.2V500.0M196.8 490.0V499.0M198.1 489.8V498.6M199.3 489.5V499.4M200.5 491.3V500.4M201.8 491.0V500.3M203.0 490.1V499.5M204.3 490.8V500.6M205.5 489.8V499.9M206.7 487.9V499.1M208.0 491.1V503.4M209.2 490.6V500.5M210.5 487.4V500.4M211.7 490.9V503.6M212.9 490.6V500.0M214.2 490.6V499.7M215.4 490.0V502.8M216.7 490.3V500.1M217.9 491.1V499.8M219.1 491.0V502.7M220.4 491.3V506.0M221.6 490.6V500.4M222.9 491.5V500.4M224.1 487.3V499.8M225.3 491.0V500.8M226.6 490.8V499.9M227.8 490.2V500.3M229.1 489.7V500.9M230.3 490.2V499.9M231.5 490.9V500.6M232.8 489.6V499.0M234.0 491.4V499.4M235.3 490.7V501.1M236.5 491.5V499.6M237.7 490.0V502.9M239.0 489.4V499.2M240.2 489.7V499.7M241.5 490.5V503.4M242.7 491.3V500.5M243.9 487.8V499.6M245.2 490.0V499.7M246.4 488.7V499.6M247.7 488.6V500.7M248.9 490.3V500.1M250.1 490.4V499.3M251.4 490.5V499.9M252.6 488.2V500.3M253.9 487.7V503.9M255.1 487.1V499.7M256.3 491.0V500.8M257.6 490.4V500.1M258.8 489.9V499.9M260.1 489.9V500.4M261.3 487.2V499.5M262.5 488.7V503.6M263.8 490.9V499.9M265.0 490.5V500.0M266.3 490.9V500.6M267.5 491.0V501.6M268.7 491.2V502.8M270.0 489.7V499.8M271.2 485.6V499.9M272.5 490.8V502.6M273.7 490.1V499.1M274.9 490.0V501.6M276.2 491.1V500.2M277.4 491.4V501.5M278.7 486.4V500.0M279.9 489.7V501.1M281.1 489.6V500.9M282.4 489.9V500.7M283.6 487.9V499.2M284.9 490.4V504.3M286.1 487.8V500.2M287.3 489.6V499.5M288.6 485.9V499.8M289.8 491.1V501.4M291.1 491.0V499.5M292.3 491.0V500.3M293.5 488.2V500.6M294.8 489.5V499.9M296.0 490.2V500.2M297.3 490.0V499.7M298.5 487.8V502.8M299.7 489.9V500.0M301.0 490.0V499.7M302.2 491.1V502.1M303.5 492.3V501.6M304.7 491.9V501.0M305.9 488.2V504.0M307.2 490.9V500.3M308.4 488.1V501.1M309.7 492.3V502.1M310.9 489.9V503.4M312.1 489.0V505.8M313.4 491.3V500.7M314.6 490.5V500.2M315.9 491.1V500.4M317.1 490.7V500.0M318.3 490.3V502.5M319.6 490.7V498.8M320.8 488.8V499.4M322.1 490.6V498.8M323.3 486.8V499.7M324.5 489.0V500.4M325.8 490.0V498.7M327.0 487.0V499.0M328.3 490.1V500.1M329.5 490.5V499.0M330.7 486.3V499.5M332.0 487.0V500.5M333.2 490.1V503.5M334.5 489.2V502.7M335.7 490.9V502.8M336.9 489.1V500.1M338.2 490.3V499.2M339.4 487.8V500.4M340.7 489.9V500.1M341.9 490.8V501.9M343.1 487.5V499.6M344.4 490.3V499.6M345.6 489.4V502.5M346.9 488.7V499.2M348.1 488.0V499.2M349.3 490.3V499.0M350.6 490.4V498.4M351.8 489.9V503.1M353.1 488.2V499.5M354.3 487.1V502.7M355.5 490.3V499.4M356.8 490.2V499.2M358.0 488.4V500.4M359.3 491.2V500.7M360.5 491.0V499.0M361.7 488.1V501.2M363.0 491.1V502.3M364.2 487.4V499.3M365.5 490.3V499.3M366.7 489.1V498.8M367.9 488.9V499.3M369.2 488.7V503.1M370.4 489.6V499.0M371.7 489.7V499.3M372.9 488.7V500.0M374.1 487.6V500.3M375.4 488.7V500.3M376.6 487.8V503.3M377.9 491.1V499.6M379.1 489.7V500.9M380.3 490.3V499.9M381.6 490.8V503.0M382.8 489.6V500.6M384.1 489.8V500.2M385.3 487.1V499.2M386.5 487.9V499.1M387.8 490.3V498.8M389.0 490.3V498.9M390.3 490.4V498.7M391.5 488.6V499.5M392.7 490.1V500.2M394.0 490.0V503.2M395.2 487.8V500.2M396.5 488.9V499.0M397.7 488.3V499.4M398.9 490.2V499.7M400.2 487.6V500.4M401.4 490.1V503.0M402.7 490.3V499.1M403.9 490.1V499.1M405.1 490.9V500.6M406.4 485.8V499.6M407.6 490.5V500.2M408.9 489.9V500.2M410.1 490.7V499.9M411.3 488.5V500.1M412.6 491.1V499.8M413.8 491.1V500.1M415.1 489.3V498.7M416.3 490.7V501.1M417.5 487.1V499.8M418.8 491.0V499.8M420.0 490.6V500.7M421.3 489.6V501.8M422.5 491.0V500.5M423.7 491.1V499.9M425.0 491.3V504.2M426.2 490.9V500.0M427.5 486.3V500.6M428.7 490.3V500.3M429.9 490.3V499.7M431.2 490.7V500.3M432.4 490.7V500.9M433.7 490.6V500.9M434.9 487.2V503.4M436.1 489.3V500.8M437.4 491.4V500.4M438.6 488.3V501.0M439.9 490.2V501.8M441.1 491.0V499.9M442.3 486.3V500.6M443.6 490.7V500.2M444.8 490.6V506.2M446.1 489.2V503.4M447.3 491.4V504.8M448.5 490.8V500.3M449.8 490.7V502.8M451.0 491.0V500.3M452.3 487.0V500.6M453.5 486.3V500.9M454.7 490.8V501.0M456.0 487.3V501.4M457.2 496.6V518.7M458.5 518.7V648.8M459.7 648.9V710.5M460.9 710.5V716.3M462.2 713.9V724.4M463.4 711.0V728.6M464.7 716.7V726.9M465.9 713.6V725.3M467.1 714.4V724.2M468.4 708.9V723.1M469.6 710.7V722.2M470.9 714.6V724.2M472.1 718.7V732.0M473.3 722.9V732.4M474.6 726.1V737.4M475.8 728.0V739.9M477.1 727.8V737.9M478.3 727.9V737.5M479.5 725.9V736.4M480.8 727.6V736.9M482.0 728.5V740.4M483.3 728.1V738.3M484.5 726.2V737.7M485.7 720.6V736.1M487.0 721.0V732.7M488.2 722.4V731.7M489.5 721.4V729.9M490.7 717.4V728.6M491.9 717.5V729.0M493.2 718.8V729.3M494.4 718.1V727.4M495.7 713.3V727.3M496.9 716.5V727.4M498.1 716.6V728.8M499.4 717.4V727.1M500.6 716.9V730.6M501.9 716.5V726.6M503.1 716.8V730.0M504.3 715.3V725.9M505.6 715.4V726.6M506.8 715.3V728.9M508.1 716.5V725.0M509.3 716.0V726.7M510.5 714.5V725.9M511.8 713.3V725.3M513.0 712.7V730.1M514.3 716.4V725.9M515.5 713.9V725.5M516.7 716.7V725.9M518.0 716.4V725.3M519.2 716.8V725.9M520.5 716.1V726.2M521.7 716.5V725.7M522.9 711.8V724.6M524.2 716.2V729.6M525.4 716.1V727.5M526.7 716.0V728.7M527.9 715.6V726.8M529.1 716.2V727.8M530.4 712.9V726.7M531.6 716.4V727.8M532.9 715.9V725.3M534.1 716.2V726.0M535.3 715.6V724.7M536.6 716.6V726.0M537.8 716.2V725.9M539.1 715.8V725.6M540.3 716.0V725.4M541.5 716.0V725.3M542.8 717.1V726.0M544.0 717.4V730.4M545.3 716.8V726.8M546.5 716.3V726.8M547.7 715.6V730.0M549.0 712.7V731.1M550.2 717.2V728.4M551.5 715.6V728.0M552.7 718.5V728.7M553.9 717.2V729.9M555.2 718.8V727.9M556.4 718.4V729.5M557.7 718.8V728.2M558.9 716.7V729.0M560.1 718.5V728.2M561.4 714.1V727.5M562.6 719.7V727.6M563.9 718.1V728.3M565.1 717.8V729.4M566.3 719.3V731.2M567.6 718.9V728.1M568.8 715.6V729.8M570.1 718.7V729.9M571.3 715.0V728.8M572.5 717.4V728.5M573.8 719.3V732.0M575.0 718.9V727.7M576.3 719.0V731.9M577.5 718.9V727.2M578.7 718.0V727.4M580.0 719.0V727.3M581.2 717.7V727.6M582.5 718.5V727.2M583.7 718.2V727.7M584.9 717.8V730.6M586.2 719.4V731.5M587.4 718.0V728.0M588.7 714.5V728.6M589.9 716.1V727.5M591.1 718.9V728.4M592.4 717.1V729.7M593.6 719.4V729.0M594.9 714.5V732.8M596.1 719.8V729.0M597.3 718.6V732.4M598.6 718.6V728.0M599.8 718.4V728.4M601.1 717.0V728.3M602.3 717.6V733.1M603.5 719.0V728.4M604.8 720.0V729.3M606.0 718.6V732.8M607.3 719.2V729.7M608.5 715.5V730.2M609.7 718.7V731.5M611.0 715.4V733.3M612.2 715.1V727.6M613.5 715.6V728.7M614.7 718.7V729.0M615.9 718.7V728.0M617.2 719.2V728.3M618.4 719.0V727.5M619.7 718.1V727.8M620.9 718.5V729.5M622.1 715.3V728.6M623.4 719.3V728.8M624.6 717.7V727.7M625.9 719.1V727.9M627.1 719.4V728.0M628.3 715.8V728.5M629.6 718.5V727.7M630.8 714.7V728.1M632.1 718.2V729.5M633.3 716.9V727.8M634.5 719.6V728.2M635.8 715.4V728.4M637.0 717.8V727.7M638.3 719.1V733.8M639.5 716.5V729.0M640.7 719.1V728.6M642.0 719.8V728.8M643.2 719.7V728.5M644.5 719.9V734.0M645.7 720.4V732.9M646.9 719.3V729.5M648.2 719.4V732.3M649.4 720.3V731.3M650.7 718.9V730.8M651.9 719.3V729.6M653.1 716.2V729.1M654.4 715.6V732.4M655.6 719.3V731.3M656.9 715.0V728.9M658.1 719.6V728.9M659.3 719.1V729.8M660.6 717.9V728.7M661.8 719.9V729.3M663.1 719.8V728.4M664.3 718.8V728.1M665.5 719.1V728.5M666.8 718.2V731.1M668.0 719.0V729.8M669.3 718.3V729.4M670.5 716.3V732.6M671.7 717.9V728.0M673.0 720.2V729.3M674.2 715.3V728.2M675.5 720.2V729.0M676.7 717.5V731.3M677.9 719.7V730.7M679.2 719.9V728.2M680.4 718.7V729.0M681.7 719.0V728.6M682.9 719.0V728.4M684.1 719.4V727.6M685.4 719.4V728.8M686.6 718.6V728.5M687.9 717.7V729.1M689.1 717.7V731.8M690.3 718.1V727.8M691.6 717.7V726.7M692.8 715.9V727.2M694.1 717.9V727.0M695.3 715.2V726.9M696.5 718.2V727.7M697.8 719.4V728.8M699.0 720.0V728.4M700.3 718.7V729.4M701.5 719.9V729.0M702.7 716.8V731.4M704.0 714.6V728.7M705.2 720.3V728.8M706.5 719.1V729.4M707.7 720.4V729.0M708.9 720.1V729.0M710.2 719.0V728.4M711.4 718.9V729.2M712.7 720.9V729.0M713.9 720.1V730.0M715.1 721.1V729.4M716.4 716.8V729.2M717.6 720.8V732.1M718.9 720.7V729.4M720.1 717.5V730.2M721.3 720.4V729.5M722.6 719.6V731.2M723.8 717.4V727.5M725.1 718.4V727.9M726.3 718.3V727.4M727.5 718.8V729.0M728.8 718.3V728.9M730.0 715.7V731.1M731.3 719.4V729.7M732.5 719.9V732.6M733.7 719.4V728.3M735.0 715.1V730.2M736.2 718.8V729.0M737.5 719.4V728.8M738.7 719.9V731.6M739.9 719.5V728.2M741.2 719.0V731.1M742.4 719.3V729.4M743.7 719.6V730.2M744.9 716.1V728.5M746.1 719.1V729.1M747.4 719.7V729.1M748.6 717.0V728.0M749.9 719.3V728.2M751.1 718.4V727.8M752.3 718.4V728.3M753.6 717.6V731.8M754.8 719.1V728.4M756.1 719.5V728.2M757.3 720.0V728.1M758.5 718.2V728.8M759.8 720.0V728.6M761.0 719.7V729.1M762.3 715.3V731.8M763.5 720.5V729.8M764.7 717.1V731.5M766.0 717.1V730.2M767.2 720.1V729.0M768.5 719.0V728.0M769.7 714.4V728.1M770.9 719.6V728.6M772.2 718.6V729.1M773.4 716.3V729.1M774.7 718.9V729.0M775.9 715.5V727.8M777.1 719.4V727.6M778.4 719.8V732.2M779.6 719.4V731.2M780.9 720.0V729.3M782.1 717.3V728.8M783.3 719.7V732.8M784.6 714.8V730.7M785.8 720.1V733.2M787.1 718.4V728.7M788.3 716.4V728.4M789.5 718.2V727.9M790.8 718.8V727.4M792.0 715.2V732.0M793.3 718.5V731.7M794.5 718.8V728.6M795.7 719.3V731.0M797.0 719.9V733.7M798.2 715.2V728.6M799.5 718.9V730.3M800.7 719.4V731.1M801.9 719.6V729.6M803.2 720.2V729.3M804.4 718.6V728.8M805.7 720.3V728.9M806.9 717.7V728.9M808.1 720.0V728.6M809.4 718.4V728.5M810.6 719.8V730.9M811.9 719.6V730.0M813.1 719.1V732.3M814.3 720.0V734.0M815.6 718.5V730.7M816.8 716.5V729.4M818.1 720.6V728.5M819.3 719.9V730.0M820.5 719.0V728.9M821.8 719.1V729.8M823.0 720.6V728.6M824.3 719.2V728.9M825.5 719.0V729.2M826.7 719.2V732.4M828.0 719.0V730.4M829.2 715.9V728.2M830.5 718.9V728.9M831.7 715.7V728.2M832.9 719.4V730.5M834.2 716.6V731.6M835.4 719.6V728.0M836.7 718.0V728.7M837.9 719.4V727.8M839.1 717.9V731.1M840.4 717.6V727.4M841.6 719.6V729.0M842.9 719.0V728.6M844.1 718.7V732.8M845.3 719.8V728.2M846.6 719.2V732.8M847.8 718.9V729.3M849.1 718.2V728.1M850.3 718.7V732.4M851.5 719.1V727.9M852.8 717.2V727.9M854.0 718.5V732.8M855.3 719.0V729.9M856.5 720.2V729.0M857.7 719.5V729.4M859.0 720.6V729.3M860.2 715.7V728.9M861.5 719.5V729.7M862.7 718.3V734.0M863.9 718.0V730.8M865.2 715.0V731.5M866.4 718.2V729.6M867.7 718.9V732.8M868.9 719.5V729.8M870.1 718.9V729.1M871.4 714.5V728.9M872.6 720.0V732.6M873.9 717.1V729.1M875.1 719.0V733.5M876.3 720.6V731.8M877.6 720.0V732.8M878.8 720.2V730.7M880.1 715.9V729.3M881.3 719.3V729.5M882.5 719.2V729.4M883.8 720.0V730.8M885.0 720.9V729.7M886.3 718.6V728.8M887.5 716.5V730.1M888.7 716.8V732.9M890.0 719.1V729.6M891.2 715.9V729.9M892.5 720.5V730.3M893.7 719.3V729.8M894.9 719.2V729.9M896.2 719.5V729.0M897.4 717.5V730.6M898.7 715.4V728.5M899.9 719.4V732.3M901.1 717.1V728.8M902.4 719.9V728.9M903.6 718.1V731.1M904.9 719.9V729.1M906.1 718.2V729.6M907.3 719.5V728.5M908.6 718.2V728.8M909.8 718.5V730.9M911.1 718.2V730.3M912.3 718.8V728.9M913.5 718.7V730.3M914.8 718.4V731.8M916.0 714.8V727.6M917.3 717.8V728.0M918.5 716.6V727.9M919.7 717.8V731.0M921.0 716.9V728.1M922.2 718.2V731.0M923.5 713.7V728.5M924.7 719.4V731.2M925.9 718.8V729.2M927.2 718.6V729.1M928.4 717.3V728.2M929.7 718.8V728.0M930.9 718.7V727.7M932.1 718.6V728.1M933.4 718.8V727.1M934.6 717.7V727.4M935.9 717.0V727.5M937.1 716.4V727.8M938.3 718.1V727.3M939.6 718.6V727.8M940.8 716.1V727.0M942.1 717.6V726.8M943.3 717.1V726.4M944.5 717.2V727.0M945.8 717.5V727.1M947.0 718.2V727.1M948.3 718.1V727.3M949.5 716.6V727.7M950.7 719.3V728.6M952.0 717.5V728.1M953.2 718.9V728.2M954.5 718.7V727.9M955.7 718.2V727.4M956.9 717.8V727.8M958.2 718.7V728.1M959.4 719.1V729.5M960.7 718.4V731.7M961.9 718.5V727.5M963.1 712.5V727.9M964.4 717.2V727.1M965.6 717.7V726.8M966.9 717.5V727.7M968.1 719.0V732.2M969.3 718.4V727.2M970.6 717.1V727.3M971.8 719.2V728.3M973.1 718.2V728.3M974.3 718.5V727.6M975.5 715.6V728.1M976.8 718.8V728.2M978.0 719.3V728.9M979.3 714.6V728.1M980.5 719.0V728.6M981.7 718.9V727.8M983.0 718.4V729.1M984.2 718.5V728.7M985.5 718.6V728.1M986.7 718.7V728.4M987.9 718.7V728.4M989.2 719.4V727.4M990.4 714.9V728.9M991.7 716.4V728.4M992.9 716.9V727.1M994.1 718.3V727.7M995.4 717.8V727.7M996.6 717.8V727.9M997.9 717.9V727.4M999.1 718.3V726.9M1000.3 718.0V727.1M1001.6 717.8V727.9M1002.8 717.7V726.9M1004.1 718.0V729.2M1005.3 717.6V728.2M1006.5 713.0V726.8M1007.8 717.6V727.7M1009.0 717.5V727.7M1010.3 718.2V727.9M1011.5 718.1V728.7M1012.7 712.8V727.6M1014.0 718.4V727.7M1015.2 715.5V727.8M1016.5 718.4V726.4M1017.7 713.0V730.9M1018.9 718.2V731.1M1020.2 717.8V727.1M1021.4 715.8V728.0M1022.7 718.4V728.6M1023.9 717.5V730.6M1025.1 719.6V728.1M1026.4 718.6V730.1M1027.6 713.6V727.8M1028.9 718.4V729.1M1030.1 718.0V728.9M1031.3 718.5V727.0M1032.6 718.4V727.7M1033.8 718.2V727.6M1035.1 717.4V728.6M1036.3 713.3V726.7M1037.5 717.9V730.4M1038.8 717.4V731.2M1040.0 716.2V727.4M1041.3 718.7V728.0M1042.5 718.0V727.0M1043.7 715.5V729.5M1045.0 718.5V728.5M1046.2 717.3V727.5M1047.5 716.7V730.1M1048.7 717.8V728.0M1049.9 717.8V727.9M1051.2 715.1V727.3M1052.4 713.6V730.2M1053.7 718.3V727.6M1054.9 718.8V728.4M1056.1 717.4V727.5M1057.4 718.6V727.6M1058.6 714.7V727.4M1059.9 717.9V727.4M1061.1 717.0V727.1M1062.3 717.9V732.3M1063.6 718.3V726.3M1064.8 717.1V727.6M1066.1 718.4V727.4M1067.3 717.0V727.0M1068.5 717.0V731.2M1069.8 718.4V727.1M1071.0 717.4V730.0M1072.3 717.6V726.4M1073.5 717.6V726.0M1074.7 718.2V730.3M1076.0 717.5V725.7M1077.2 716.7V725.4M1078.5 715.1V727.8M1079.7 716.3V727.8M1080.9 716.0V726.1M1082.2 717.0V726.2M1083.4 717.3V726.3M1084.7 716.8V725.8M1085.9 716.7V725.0M1087.1 715.7V725.1M1088.4 714.0V726.2M1089.6 715.8V729.9M1090.9 716.6V726.4M1092.1 712.6V729.2M1093.3 717.2V727.7M1094.6 716.5V727.5M1095.8 715.6V729.2M1097.1 715.9V724.7M1098.3 713.3V728.1M1099.5 713.6V729.3M1100.8 714.9V725.3M1102.0 715.4V725.6M1103.3 716.5V724.7M1104.5 716.5V725.1M1105.7 714.6V724.9M1107.0 710.0V725.3M1108.2 715.0V725.0M1109.5 715.4V724.3M1110.7 712.0V725.1M1111.9 715.2V726.9M1113.2 715.6V724.5M1114.4 715.1V725.1M1115.7 714.9V724.6M1116.9 712.5V724.4M1118.1 715.7V723.8M1119.4 715.3V726.8M1120.6 714.1V723.8M1121.9 714.9V724.5M1123.1 713.2V723.2M1124.3 714.7V724.5M1125.6 709.0V726.9M1126.8 714.6V724.2M1128.1 714.6V723.4M1129.3 712.2V723.0M1130.5 714.6V725.5M1131.8 710.9V724.9M1133.0 715.6V725.0M1134.3 716.2V726.9M1135.5 718.3V728.6M1136.7 720.6V730.5M1138.0 726.6V738.8M1139.2 734.4V746.8M1140.5 740.6V752.2M1141.7 738.6V747.8M1142.9 731.5V743.3M1144.2 710.2V735.1M1145.4 699.3V714.5M1146.7 661.6V699.5M1147.9 603.9V661.8M1149.1 559.2V604.2M1150.4 526.5V559.6M1151.6 517.1V526.6M1152.9 507.2V517.3M1154.1 502.7V512.2M1155.3 497.0V511.3M1156.6 494.8V503.3M1157.8 490.8V500.3M1159.1 490.8V499.5M1160.3 483.8V499.2M1161.5 488.4V498.9M1162.8 485.9V498.6M1164.0 487.2V497.6M1165.3 487.8V496.4M1166.5 486.3V496.8M1167.7 487.3V495.6M1169.0 487.1V496.8M1170.2 483.5V497.2M1171.5 487.3V496.6M1172.7 488.7V498.2M1173.9 487.9V500.4M1175.2 484.1V497.5M1176.4 485.4V498.3M1177.7 488.3V498.2M1178.9 488.7V497.6M1180.1 488.0V498.4M1181.4 484.3V498.5M1182.6 484.4V497.7M1183.9 489.0V497.8M1185.1 488.4V498.2M1186.3 485.3V499.8M1187.6 487.9V499.9M1188.8 488.4V500.0M1190.1 485.5V497.8M1191.3 488.4V498.7M1192.5 488.6V498.0M1193.8 488.1V501.1M1195.0 488.9V499.2M1196.3 488.7V499.7M1197.5 489.0V498.4M1198.7 488.7V499.3M1200.0 489.1V498.8M1201.2 489.4V498.2M1202.5 489.2V499.2M1203.7 489.1V498.0M1204.9 489.6V498.2M1206.2 488.2V499.4M1207.4 490.6V498.6M1208.7 490.5V499.9M1209.9 489.2V499.6M1211.1 487.3V498.9M1212.4 489.4V498.9M1213.6 489.1V498.2M1214.9 488.6V501.4M1216.1 488.1V498.8M1217.3 489.3V499.7M1218.6 489.6V499.2M1219.8 489.7V497.8M1221.1 486.3V498.3M1222.3 486.6V499.9M1223.5 490.2V500.2M1224.8 486.5V504.5M1226.0 490.1V499.8M1227.3 491.4V500.5M1228.5 491.2V501.9M1229.7 486.9V504.0M1231.0 490.6V499.7M1232.2 490.0V499.5M1233.5 490.7V499.1M1234.7 489.4V503.3M1235.9 489.3V498.8M1237.2 489.9V498.8M1238.4 489.7V498.4M1239.7 489.4V499.3M1240.9 489.5V497.9M1242.1 489.4V499.8M1243.4 489.4V498.6M1244.6 488.9V500.0M1245.9 488.1V498.4M1247.1 488.3V498.6M1248.3 487.3V501.4M1249.6 489.4V499.1M1250.8 489.3V498.4M1252.1 489.7V499.6M1253.3 489.8V498.3M1254.5 489.2V499.3M1255.8 484.2V499.0M1257.0 489.3V498.8M1258.3 488.2V498.7M1259.5 486.7V501.2M1260.7 489.5V498.1M1262.0 489.2V498.9M1263.2 489.6V498.8M1264.5 489.7V499.3M1265.7 489.1V498.6M1266.9 489.3V499.2M1268.2 487.8V498.3M1269.4 487.9V499.4M1270.7 488.8V503.5M1271.9 485.1V502.0M1273.1 490.1V499.8M1274.4 490.6V498.8M1275.6 488.0V498.9M1276.9 490.5V499.3M1278.1 489.4V499.9M1279.3 489.7V500.6M1280.6 489.6V498.2M1281.8 487.2V499.4M1283.1 487.7V498.9M1284.3 489.0V498.8M1285.5 489.2V497.9M1286.8 488.8V500.2M1288.0 489.5V498.7M1289.3 488.7V500.1M1290.5 486.5V500.8M1291.7 489.9V498.7M1293.0 486.9V498.2M1294.2 489.1V499.3M1295.5 489.3V498.9M1296.7 488.9V497.9M1297.9 489.6V498.2M1299.2 489.9V498.9M1300.4 488.9V498.2M1301.7 488.1V498.1M1302.9 484.3V498.1M1304.1 489.5V498.2M1305.4 484.6V498.6M1306.6 489.4V498.6M1307.9 489.3V498.3M1309.1 489.4V502.1M1310.3 489.1V502.6M1311.6 490.0V498.0M1312.8 487.4V498.6M1314.1 489.2V498.6M1315.3 489.3V499.8M1316.5 488.8V499.0M1317.8 489.0V498.2M1319.0 488.6V498.7M1320.3 488.7V498.0M1321.5 489.9V498.3M1322.7 490.1V500.9M1324.0 490.4V499.5M1325.2 490.5V499.7M1326.5 490.6V500.2M1327.7 487.0V503.4M1328.9 489.3V498.6M1330.2 485.6V499.5M1331.4 490.0V499.0M1332.7 490.4V499.7M1333.9 489.4V501.7M1335.1 489.5V498.4M1336.4 489.5V503.4M1337.6 489.9V498.6M1338.9 490.3V499.3M1340.1 488.4V498.9M1341.3 490.3V499.1M1342.6 490.1V499.4M1343.8 488.6V498.0M1345.1 488.8V497.8M1346.3 488.9V498.5M1347.5 489.4V499.8M1348.8 488.0V498.2M1350.0 488.7V497.1M1351.3 487.3V497.7M1352.5 486.8V498.1M1353.7 487.4V497.7M1355.0 484.0V497.1M1356.2 488.4V497.9M1357.5 487.3V497.8M1358.7 487.9V500.1M1359.9 487.9V499.9M1361.2 487.3V496.8M1362.4 487.7V500.5M1363.7 487.4V498.7M1364.9 487.7V498.1M1366.1 487.5V497.6M1367.4 487.3V497.4M1368.6 488.3V498.2M1369.9 488.0V497.4M1371.1 488.7V497.9M1372.3 487.8V499.2M1373.6 487.7V497.4M1374.8 486.3V499.8M1376.1 488.9V498.1M1377.3 488.6V498.1M1378.5 488.3V501.8M1379.8 486.2V497.3M1381.0 487.5V497.7M1382.3 486.7V497.8M1383.5 486.6V497.2M1384.7 487.3V496.8M1386.0 486.9V497.1M1387.2 482.8V496.0M1388.5 486.5V496.3M1389.7 487.0V496.4M1390.9 483.8V497.3M1392.2 486.9V496.7M1393.4 485.7V496.4M1394.7 483.8V495.3M1395.9 484.7V495.6M1397.1 486.3V495.6M1398.4 487.0V497.4M1399.6 485.5V494.6M1400.9 486.2V499.1M1402.1 485.3V495.4M1403.3 485.3V494.7M1404.6 486.2V495.0M1405.8 483.9V500.5M1407.1 485.2V498.6M1408.3 485.0V494.5M1409.5 480.3V494.5M1410.8 481.0V494.4M1412.0 483.6V493.2M1413.3 483.7V494.1M1414.5 483.9V493.9M1415.7 484.3V493.1M1417.0 484.6V494.3M1418.2 485.1V494.6M1419.5 484.3V493.5M1420.7 484.4V493.7M1421.9 484.8V494.9M1423.2 484.2V493.8M1424.4 483.0V493.8M1425.7 484.3V493.7M1426.9 484.0V498.4M1428.1 480.4V493.2M1429.4 485.4V493.7M1430.6 484.6V494.0M1431.9 480.8V496.2M1433.1 484.8V497.2M1434.3 485.0V494.9M1435.6 485.1V495.2M1436.8 485.4V495.6M1438.1 485.1V494.5M1439.3 484.7V495.6M1440.5 482.4V495.5M1441.8 486.1V498.1M1443.0 484.4V498.2M1444.3 483.9V494.5M1445.5 484.6V494.5M1446.7 481.6V495.0M1448.0 480.1V498.7M1449.2 481.5V494.5M1450.5 485.2V494.4M1451.7 481.8V497.7M1452.9 485.5V495.1M1454.2 484.3V494.8M1455.4 485.3V494.6M1456.7 485.0V495.7M1457.9 485.8V499.4M1459.1 482.7V496.6M1460.4 485.7V494.9M1461.6 485.9V494.6M1462.9 486.0V494.2M1464.1 486.3V498.9M1465.3 485.3V494.7M1466.6 483.3V496.1M1467.8 484.3V494.4M1469.1 481.2V496.3M1470.3 486.1V495.2" stroke="#f8f400" stroke-width="1.3" fill="none" shape-rendering="auto"/><g shape-rendering="auto"><path d="M459.5,635L465.8,641L459.5,646.5L453.2,641Z" fill="none" stroke="#f0ea00" stroke-width="1.5"/><path d="M450,641H453M466,641H469.5" stroke="#b0a800" stroke-width="1.5"/></g><g shape-rendering="crispEdges"><rect x="96" y="134" width="1" height="737" fill="#e2e2e2"/><rect x="96" y="134" width="1376" height="1" fill="#e8e8e8"/><rect x="1471" y="134" width="1" height="737" fill="#f2f2f2"/><rect x="96" y="870" width="1376" height="1" fill="#b4b4b4"/></g><g shape-rendering="auto" fill="#f0f000"><path d="M453,136.2H466L459.5,149.6Z"/><rect x="453" y="153" width="13" height="3"/><rect x="457.8" y="153" width="3.8" height="14.4"/></g><path d="M211,850L229,866.5H193Z" fill="none" stroke="#8c8c8c" stroke-width="1.6" shape-rendering="auto"/><path d="M51.5,345.5H85L96,355.5L85,366H51.5Z" fill="#000" stroke="#007a00" stroke-width="1.2" shape-rendering="auto"/><path d="M51.3,484.5H84.7L96,495.2L84.7,506.2H51.3Z" fill="#f8f000" shape-rendering="auto"/><path d="M1471.1,641L1481.4,630.1H1516V651.9H1481.4Z" fill="#f2ec00" shape-rendering="auto"/></svg>
<div class="t" style="left:98.20px;top:188.54px;font-family:'Liberation Mono',monospace;font-size:15.49px;line-height:15.49px;font-weight:400;color:#d2ca00;transform:scaleX(0.7245);">39 mV</div>
<div class="t" style="left:98.11px;top:262.14px;font-family:'Liberation Mono',monospace;font-size:15.49px;line-height:15.49px;font-weight:400;color:#d2ca00;transform:scaleX(0.7264);">29 mV</div>
<div class="t" style="left:98.09px;top:335.74px;font-family:'Liberation Mono',monospace;font-size:15.49px;line-height:15.49px;font-weight:400;color:#d2ca00;transform:scaleX(0.7269);">19 mV</div>
<div class="t" style="left:98.13px;top:409.34px;font-family:'Liberation Mono',monospace;font-size:15.49px;line-height:15.49px;font-weight:400;color:#d2ca00;transform:scaleX(0.7218);">9 mV</div>
<div class="t" style="left:97.01px;top:482.94px;font-family:'Liberation Mono',monospace;font-size:15.49px;line-height:15.49px;font-weight:400;color:#d2ca00;transform:scaleX(0.7502);">-1 mV</div>
<div class="t" style="left:97.01px;top:556.54px;font-family:'Liberation Mono',monospace;font-size:15.49px;line-height:15.49px;font-weight:400;color:#d2ca00;transform:scaleX(0.7489);">-11 mV</div>
<div class="t" style="left:97.01px;top:630.14px;font-family:'Liberation Mono',monospace;font-size:15.49px;line-height:15.49px;font-weight:400;color:#d2ca00;transform:scaleX(0.7489);">-21 mV</div>
<div class="t" style="left:97.01px;top:703.74px;font-family:'Liberation Mono',monospace;font-size:15.49px;line-height:15.49px;font-weight:400;color:#d2ca00;transform:scaleX(0.7489);">-31 mV</div>
<div class="t" style="left:97.01px;top:777.34px;font-family:'Liberation Mono',monospace;font-size:15.49px;line-height:15.49px;font-weight:400;color:#d2ca00;transform:scaleX(0.7489);">-41 mV</div>
<div class="t" style="left:97.01px;top:850.94px;font-family:'Liberation Mono',monospace;font-size:15.49px;line-height:15.49px;font-weight:400;color:#d2ca00;transform:scaleX(0.7489);">-51 mV</div>
<div class="t" style="left:211.87px;top:851.74px;font-family:'Liberation Mono',monospace;font-size:15.49px;line-height:15.49px;font-weight:400;color:#d2ca00;transform:scaleX(0.7563);">-1.0852 µs</div>
<div class="t" style="left:326.45px;top:851.74px;font-family:'Liberation Mono',monospace;font-size:15.49px;line-height:15.49px;font-weight:400;color:#d2ca00;transform:scaleX(0.7579);">-585.2 ns</div>
<div class="t" style="left:441.03px;top:851.74px;font-family:'Liberation Mono',monospace;font-size:15.49px;line-height:15.49px;font-weight:400;color:#d2ca00;transform:scaleX(0.7599);">-85.2 ns</div>
<div class="t" style="left:556.96px;top:851.74px;font-family:'Liberation Mono',monospace;font-size:15.49px;line-height:15.49px;font-weight:400;color:#d2ca00;transform:scaleX(0.7415);">414.8 ns</div>
<div class="t" style="left:671.32px;top:851.74px;font-family:'Liberation Mono',monospace;font-size:15.49px;line-height:15.49px;font-weight:400;color:#d2ca00;transform:scaleX(0.7445);">914.8 ns</div>
<div class="t" style="left:785.87px;top:851.74px;font-family:'Liberation Mono',monospace;font-size:15.49px;line-height:15.49px;font-weight:400;color:#d2ca00;transform:scaleX(0.7447);">1.4148 µs</div>
<div class="t" style="left:900.45px;top:851.74px;font-family:'Liberation Mono',monospace;font-size:15.49px;line-height:15.49px;font-weight:400;color:#d2ca00;transform:scaleX(0.7447);">1.9148 µs</div>
<div class="t" style="left:1015.06px;top:851.74px;font-family:'Liberation Mono',monospace;font-size:15.49px;line-height:15.49px;font-weight:400;color:#d2ca00;transform:scaleX(0.7445);">2.4148 µs</div>
<div class="t" style="left:1129.64px;top:851.74px;font-family:'Liberation Mono',monospace;font-size:15.49px;line-height:15.49px;font-weight:400;color:#d2ca00;transform:scaleX(0.7445);">2.9148 µs</div>
<div class="t" style="left:1244.31px;top:851.74px;font-family:'Liberation Mono',monospace;font-size:15.49px;line-height:15.49px;font-weight:400;color:#d2ca00;transform:scaleX(0.7434);">3.4148 µs</div>
<div class="t" style="left:1358.90px;top:851.74px;font-family:'Liberation Mono',monospace;font-size:15.49px;line-height:15.49px;font-weight:400;color:#d2ca00;transform:scaleX(0.7434);">3.9148 µs</div>
<div class="t" style="left:55.95px;top:345.69px;font-family:'Liberation Sans',sans-serif;font-size:21.51px;line-height:21.51px;font-weight:400;color:#00a000;transform:scaleX(0.6910);">C2</div>
<div class="t" style="left:56.09px;top:485.66px;font-family:'Liberation Sans',sans-serif;font-size:21.08px;line-height:21.08px;font-weight:400;color:#000;transform:scaleX(0.5676);">C1</div>
<div class="t" style="left:1488.03px;top:632.89px;font-family:'Liberation Sans',sans-serif;font-size:17.73px;line-height:17.73px;font-weight:700;color:#000;transform:scaleX(0.8700);">TL</div>
<div class="t" style="left:1439.16px;top:344.02px;font-family:'Liberation Sans',sans-serif;font-size:14.39px;line-height:14.39px;font-weight:400;color:#00d000;transform:scaleX(0.8780);">PRK</div>
<div style="left:1445.50px;top:484.00px;width:20.50px;height:13.00px;background:#000;"></div>
<div class="t" style="left:1445.40px;top:483.49px;font-family:'Liberation Sans',sans-serif;font-size:14.53px;line-height:14.53px;font-weight:400;color:#e8e000;transform:scaleX(0.8427);">PIK</div>
<div style="left:52.00px;top:871.00px;width:1465.00px;height:44.00px;background:#1a1f22;"></div>
<div style="left:54.40px;top:879.70px;width:26.60px;height:26.30px;background:#00e000;"></div>
<div class="t" style="left:57.70px;top:886.26px;font-family:'Liberation Sans',sans-serif;font-size:15.99px;line-height:15.99px;font-weight:400;color:#004000;transform:scaleX(0.9829);">C2</div>
<svg style="left:0;top:0" width="1587" height="1011" viewBox="0 0 1587 1011"><path d="M88.6,879.8H85.2V906.4H88.6M92.8,879.8H96.2V906.4H92.8" fill="none" stroke="#fff" stroke-width="1.9"/></svg>
<div class="t" style="left:101.31px;top:879.80px;font-family:'Liberation Sans',sans-serif;font-size:26.45px;line-height:26.45px;font-weight:400;color:#fff;transform:scaleX(0.7802);">Mean: -1.1061 mV</div>
<div style="left:51.50px;top:915.30px;width:48.80px;height:47.50px;background:#fff200;"></div>
<div style="left:100.30px;top:915.30px;width:178.70px;height:47.50px;background:#2b343a;"></div>
<div style="left:100.30px;top:915.30px;width:178.70px;height:2.70px;background:#fff200;"></div>
<div class="t" style="left:63.77px;top:927.15px;font-family:'Liberation Sans',sans-serif;font-size:24.27px;line-height:24.27px;font-weight:400;color:#000;transform:scaleX(0.6746);">C1</div>
<div class="t" style="left:133.80px;top:926.69px;font-family:'Liberation Sans',sans-serif;font-size:29.07px;line-height:29.07px;font-weight:400;color:#fff;transform:scaleX(0.9039);">10</div>
<div class="t" style="left:166.68px;top:933.51px;font-family:'Liberation Sans',sans-serif;font-size:21.37px;line-height:21.37px;font-weight:400;color:#fff;transform:scaleX(0.7892);">mV</div>
<svg style="left:0;top:0" width="1587" height="1011" viewBox="0 0 1587 1011"><path d="M194.6,953.4L200.4,934.2" stroke="#fff" stroke-width="1.7"/></svg>
<div class="t" style="left:258.51px;top:917.74px;font-family:'Liberation Sans',sans-serif;font-size:23.69px;line-height:23.69px;font-weight:400;color:#fff;transform:scaleX(0.9881);">Ω</div>
<div class="t" style="left:261.65px;top:947.21px;font-family:'Liberation Sans',sans-serif;font-size:15.70px;line-height:15.70px;font-weight:400;color:#c0c0c0;transform:scaleX(0.7150);">1:1</div>
<div style="left:281.50px;top:915.20px;width:49.40px;height:47.50px;background:#007a00;"></div>
<div style="left:330.90px;top:915.20px;width:178.60px;height:47.50px;background:#2b343a;"></div>
<div style="left:330.90px;top:915.20px;width:178.60px;height:2.80px;background:#008000;"></div>
<div class="t" style="left:293.70px;top:926.43px;font-family:'Liberation Sans',sans-serif;font-size:25.00px;line-height:25.00px;font-weight:400;color:#000;transform:scaleX(0.7101);">C2</div>
<div class="t" style="left:378.35px;top:926.59px;font-family:'Liberation Sans',sans-serif;font-size:29.65px;line-height:29.65px;font-weight:400;color:#fff;transform:scaleX(0.6414);">1</div>
<div class="t" style="left:396.68px;top:933.61px;font-family:'Liberation Sans',sans-serif;font-size:21.37px;line-height:21.37px;font-weight:400;color:#fff;transform:scaleX(0.7892);">mV</div>
<svg style="left:0;top:0" width="1587" height="1011" viewBox="0 0 1587 1011"><path d="M424.6,953.6L430.4,934.4" stroke="#fff" stroke-width="1.7"/></svg>
<div class="t" style="left:488.44px;top:917.74px;font-family:'Liberation Sans',sans-serif;font-size:23.69px;line-height:23.69px;font-weight:400;color:#fff;transform:scaleX(1.0519);">Ω</div>
<div class="t" style="left:491.96px;top:947.21px;font-family:'Liberation Sans',sans-serif;font-size:15.70px;line-height:15.70px;font-weight:400;color:#c0c0c0;transform:scaleX(0.6999);">1:1</div>
<div style="left:511.80px;top:915.20px;width:49.20px;height:47.50px;background:#808080;"></div>
<div style="left:561.00px;top:915.20px;width:63.20px;height:47.50px;background:#2b343a;"></div>
<div style="left:561.00px;top:915.20px;width:63.20px;height:2.40px;background:#808080;"></div>
<div class="t" style="left:523.65px;top:925.94px;font-family:'Liberation Sans',sans-serif;font-size:25.58px;line-height:25.58px;font-weight:400;color:#000;transform:scaleX(0.7299);">C3</div>
<div style="left:626.50px;top:915.20px;width:49.10px;height:47.50px;background:#808080;"></div>
<div style="left:675.60px;top:915.20px;width:63.30px;height:47.50px;background:#2b343a;"></div>
<div style="left:675.60px;top:915.20px;width:63.30px;height:2.40px;background:#808080;"></div>
<div class="t" style="left:639.06px;top:925.94px;font-family:'Liberation Sans',sans-serif;font-size:25.58px;line-height:25.58px;font-weight:400;color:#000;transform:scaleX(0.7242);">C4</div>
<div style="left:740.80px;top:914.80px;width:687.70px;height:47.70px;background:#2b343a;"></div>
<svg style="left:0;top:0" width="1587" height="1011" viewBox="0 0 1587 1011">
<path d="M1430.6,962.5V914.8H1432L1474.7,875.7L1517.4,914.2V962.5Z" fill="#2b343a"/>
<path d="M1474.7,879L1511.7,915.8L1474.7,950.4L1438.2,915.8Z" fill="none" stroke="#ff8a00" stroke-width="2"/>
<path d="M1474.7,888.5L1502.5,915.8L1474.7,943L1447,915.8Z" fill="none" stroke="#1a9fff" stroke-width="5"/>
<path d="M1485.6,901.5C1478,906 1478,912 1474.5,916.5C1471,921 1467,920 1461.5,928" fill="none" stroke="#1a9fff" stroke-width="3.4"/>
</svg>
<div class="t" style="left:1451.01px;top:944.44px;font-family:'Liberation Sans',sans-serif;font-size:19.91px;line-height:19.91px;font-weight:700;color:#fff;transform:scaleX(0.8937);">Menu</div>
<div class="t" style="left:1462.01px;top:902.29px;font-family:'Liberation Sans',sans-serif;font-size:16.42px;line-height:16.42px;font-weight:700;color:#1a9fff;transform:scaleX(0.9016);">R</div>
<div class="t" style="left:1475.43px;top:914.42px;font-family:'Liberation Sans',sans-serif;font-size:18.17px;line-height:18.17px;font-weight:700;color:#1a9fff;transform:scaleX(1.0840);">S</div>
</body></html>
